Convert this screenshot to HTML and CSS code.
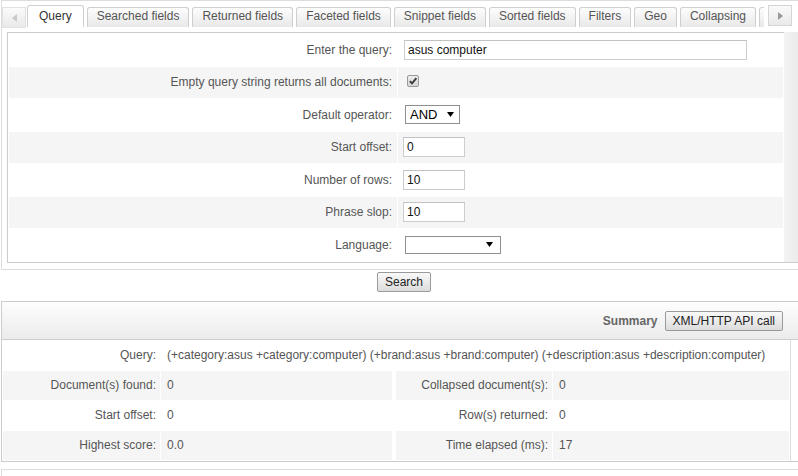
FILE: index.html
```html
<!DOCTYPE html>
<html lang="en">
<head>
<meta charset="utf-8">
<title>Query</title>
<link rel="stylesheet" href="styles.css">
</head>
<body>
<div class="tabs">
  <div class="tabbar">
    <span class="scroller scroller-left"><svg width="5" height="8" viewBox="0 0 5 8"><polygon points="5,0 5,8 0,4"/></svg></span>
    <ul class="tablist">
      <li class="tab tab-active">Query</li>
      <li class="tab">Searched fields</li>
      <li class="tab">Returned fields</li>
      <li class="tab">Faceted fields</li>
      <li class="tab">Snippet fields</li>
      <li class="tab">Sorted fields</li>
      <li class="tab">Filters</li>
      <li class="tab">Geo</li>
      <li class="tab">Collapsing</li>
      <li class="tab tab-more" aria-hidden="true"></li>
    </ul>
    <span class="scroller scroller-right"><svg width="5" height="8" viewBox="0 0 5 8"><polygon points="0,0 5,4 0,8"/></svg></span>
  </div>
  <div class="tabbody">
    <div class="panel">
      <div class="form">
        <div class="row">
          <label class="lbl">Enter the query:</label>
          <div class="val"><input class="txt txt-wide" type="text" value="asus computer"></div>
        </div>
        <div class="row row-alt">
          <label class="lbl">Empty query string returns all documents:</label>
          <div class="val"><span class="check"><svg width="10" height="10" viewBox="0 0 10 10"><path d="M1.8 5.2 L4 7.4 L8.4 2.2" fill="none" stroke="#3a3a3a" stroke-width="1.9"/></svg></span></div>
        </div>
        <div class="row">
          <label class="lbl">Default operator:</label>
          <div class="val"><span class="sel sel-op"><select><option>AND</option><option>OR</option></select><svg width="7" height="5" viewBox="0 0 7 5"><polygon points="0,0 7,0 3.5,5"/></svg></span></div>
        </div>
        <div class="row row-alt">
          <label class="lbl">Start offset:</label>
          <div class="val"><input class="txt" type="text" value="0"></div>
        </div>
        <div class="row">
          <label class="lbl">Number of rows:</label>
          <div class="val"><input class="txt" type="text" value="10"></div>
        </div>
        <div class="row row-alt">
          <label class="lbl">Phrase slop:</label>
          <div class="val"><input class="txt" type="text" value="10"></div>
        </div>
        <div class="row">
          <label class="lbl">Language:</label>
          <div class="val"><span class="sel sel-lang"><select><option></option></select><svg width="7" height="5" viewBox="0 0 7 5"><polygon points="0,0 7,0 3.5,5"/></svg></span></div>
        </div>
      </div>
    </div>
    <div class="gutter"></div>
  </div>
</div>

<div class="actions">
  <button class="btn" type="button">Search</button>
</div>

<div class="summary">
  <div class="summary-head">
    <span class="summary-title">Summary</span>
    <button class="btn" type="button">XML/HTTP API call</button>
  </div>
  <div class="summary-body">
    <div class="stats">
      <div class="c lbl">Query:</div>
      <div class="c v span3">(+category:asus +category:computer) (+brand:asus +brand:computer) (+description:asus +description:computer)</div>

      <div class="c lbl alt">Document(s) found:</div>
      <div class="c v v2 alt">0</div>
      <div class="c lbl alt">Collapsed document(s):</div>
      <div class="c v alt">0</div>

      <div class="c lbl">Start offset:</div>
      <div class="c v v2">0</div>
      <div class="c lbl">Row(s) returned:</div>
      <div class="c v">0</div>

      <div class="c lbl alt">Highest score:</div>
      <div class="c v v2 alt">0.0</div>
      <div class="c lbl alt">Time elapsed (ms):</div>
      <div class="c v alt">17</div>
    </div>
    <div class="summary-gutter"></div>
  </div>
</div>

<div class="next"></div>
</body>
</html>
```

FILE: styles.css
```css
html, body {
  margin: 0;
  padding: 0;
  background: #fff;
  overflow: hidden;
}

body {
  font-family: "Liberation Sans", Arial, sans-serif;
  font-size: 12px;
  color: #555;
}

/* ---------- tabs ---------- */
.tabs {
  margin-left: 1px;
  border: 1px solid #ddd;
  border-right: none;
}

.tabbar {
  display: flex;
  align-items: flex-end;
  height: 31px;
  box-sizing: border-box;
  padding-bottom: 5px;
}

.scroller {
  flex: none;
  box-sizing: border-box;
  width: 24px;
  height: 21px;
  border: 1px solid #e2e2e2;
  background: linear-gradient(#fbfbfb, #e9e9e9);
  display: flex;
  align-items: center;
  justify-content: center;
}

.scroller-left {
  margin-bottom: -1px;
  fill: #c9c9c9;
}

.scroller-right {
  margin-left: 4px;
  margin-bottom: 1px;
  fill: #9a9a9a;
  border-color: #d6d6d6;
}

.tablist {
  display: flex;
  align-items: flex-end;
  list-style: none;
  margin: 0;
  padding: 0 0 0 1px;
  width: 737px;
  flex: none;
  overflow: hidden;
}

.tab {
  flex: none;
  margin-right: 3px;
  padding: 0 9px 3px;
  line-height: 16px;
  border: 1px solid #cfcfcf;
  border-bottom: none;
  border-radius: 3px 3px 0 0;
  background: linear-gradient(#fdfdfd, #e8e8e8);
  color: #555;
  white-space: nowrap;
}

.tab-active {
  padding: 2px 11px 3px;
  background: #fff;
  color: #333;
}

.tab-more {
  width: 60px;
  height: 16px;
}

.tabbody {
  display: flex;
  margin: 0 0 6px 5px;
  border-left: 1px solid #ccc;
  border-bottom: 1px solid #ccc;
}

.panel {
  width: 776px;
  flex: none;
  border-top: 1px solid #ccc;
}

.gutter {
  flex: 1;
  background: linear-gradient(to right, #f3f3f3, #ebebeb);
}

/* ---------- form ---------- */
.form {
  display: flex;
  flex-direction: column;
  gap: 1px;
  padding: 1px;
}

.row {
  display: grid;
  grid-template-columns: 388px 385px;
  column-gap: 1px;
  height: 31.5px;
}

.row-alt .lbl,
.row-alt .val {
  background: #f5f5f5;
}

.row .lbl {
  display: flex;
  align-items: center;
  justify-content: flex-end;
  padding-right: 5px;
  color: #555;
}

.row .val {
  display: flex;
  align-items: center;
  padding-left: 5px;
}

.txt {
  box-sizing: border-box;
  width: 62px;
  height: 20px;
  margin: 0;
  padding: 0 3px;
  border: 1px solid #cdcdcd;
  border-top-color: #c2c2c2;
  font-family: "Liberation Sans", Arial, sans-serif;
  font-size: 12px;
  color: #111;
  background: #fff;
  outline: none;
}

.txt-wide {
  width: 343px;
  margin-left: 1px;
}

.check {
  box-sizing: border-box;
  width: 12px;
  height: 12px;
  margin: -3px 0 0 4px;
  border: 1px solid #9a9a9a;
  border-radius: 2px;
  background: linear-gradient(#ececec, #d6d6d6);
  display: flex;
  align-items: center;
  justify-content: center;
}

.sel {
  position: relative;
  display: inline-block;
  margin-left: 2px;
  line-height: 0;
}

.sel select {
  appearance: none;
  -webkit-appearance: none;
  box-sizing: border-box;
  margin: 0;
  padding: 0 0 0 4px;
  border: 1px solid #8f8f8f;
  border-radius: 0;
  background: #fff;
  font-family: "Liberation Sans", Arial, sans-serif;
  font-size: 13px;
  color: #000;
  outline: none;
}

.sel svg {
  position: absolute;
  right: 6px;
  top: 7px;
  fill: #000;
  pointer-events: none;
}

.sel-op select {
  width: 55px;
  height: 19px;
}

.sel-lang select {
  width: 96px;
  height: 18px;
}

.sel-lang svg {
  right: 8px;
  top: 6px;
}

/* ---------- buttons ---------- */
.actions {
  display: flex;
  justify-content: center;
  padding: 2px 0 9px 10px;
}

.btn {
  box-sizing: border-box;
  height: 20px;
  margin: 0;
  padding: 0 7px;
  border: 1px solid #9a9a9a;
  border-radius: 2px;
  background: linear-gradient(#f9f9f9, #dcdcdc);
  font-family: "Liberation Sans", Arial, sans-serif;
  font-size: 12px;
  color: #222;
  line-height: 18px;
}

/* ---------- summary ---------- */
.summary {
  margin-left: 1px;
  border: 1px solid #ccc;
  border-right: none;
}

.summary-head {
  display: flex;
  align-items: center;
  justify-content: flex-end;
  height: 38px;
  box-sizing: border-box;
  padding: 1px 15px 0 0;
  background: linear-gradient(#fefefe, #ebebeb);
  border-bottom: 1px solid #ccc;
}

.summary-title {
  font-weight: bold;
  color: #666;
  margin-right: 7px;
}

.summary-body {
  display: flex;
}

.stats {
  display: grid;
  grid-template-columns: 157px 234px 156px 236px;
  grid-auto-rows: 29px;
  gap: 1px;
  padding: 1px;
  border-right: 1px solid #dcdcdc;
}

.stats .c {
  display: flex;
  align-items: center;
  box-sizing: border-box;
}

.stats .lbl {
  justify-content: flex-end;
  padding-right: 4px;
  color: #555;
}

.stats .v {
  padding-left: 6px;
  color: #555;
  white-space: nowrap;
}

.stats .v2 {
  border-right: 3px solid #fff;
}

.stats .span3 {
  grid-column: 2 / span 3;
}

.stats .alt {
  background: #f5f5f5;
}

.summary-gutter {
  flex: 1;
}

.next {
  margin: 7px 0 0 1px;
  height: 20px;
  border-top: 1px solid #ddd;
  border-left: 1px solid #ddd;
}
```
